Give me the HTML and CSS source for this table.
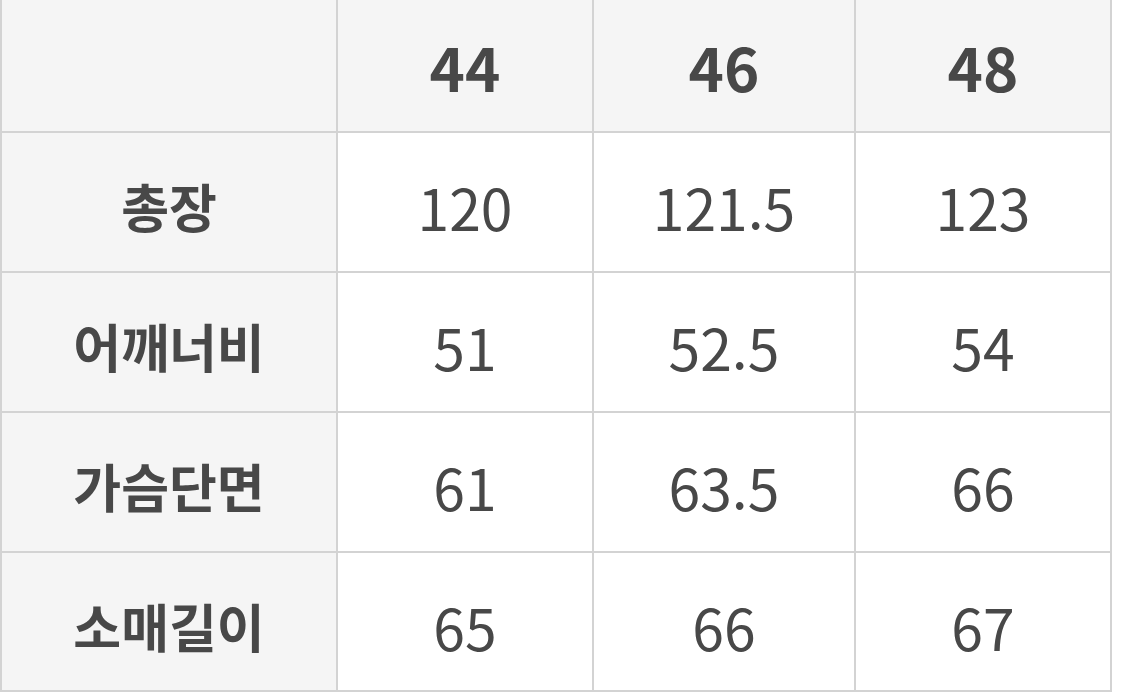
FILE: index.html
```html
<!DOCTYPE html>
<html lang="ko">
<head>
<meta charset="utf-8">
<link rel="stylesheet" href="styles.css">
</head>
<body>
<div class="sheet">
  <div class="cell head"></div>
  <div class="cell head size">44</div>
  <div class="cell head size">46</div>
  <div class="cell head size">48</div>

  <div class="cell head label">총장</div>
  <div class="cell val">120</div>
  <div class="cell val">121.5</div>
  <div class="cell val">123</div>

  <div class="cell head label">어깨너비</div>
  <div class="cell val">51</div>
  <div class="cell val">52.5</div>
  <div class="cell val">54</div>

  <div class="cell head label">가슴단면</div>
  <div class="cell val">61</div>
  <div class="cell val">63.5</div>
  <div class="cell val">66</div>

  <div class="cell head label">소매길이</div>
  <div class="cell val">65</div>
  <div class="cell val">66</div>
  <div class="cell val">67</div>
</div>
</body>
</html>
```

FILE: styles.css
```css
html, body {
  margin: 0;
  padding: 0;
  background: #ffffff;
}

body {
  width: 1125px;
  height: 694px;
  overflow: hidden;
  font-family: "Noto Sans CJK KR", "Noto Sans", sans-serif;
  color: #484848;
}

.sheet {
  display: grid;
  grid-template-columns: 334px 254px 260px 254px;
  grid-template-rows: 131px 138px 138px 138px 137px;
  gap: 2px;
  padding: 0 2px 2px 2px;
  background: #d3d3d3;
  width: max-content;
}

.cell {
  display: flex;
  align-items: center;
  justify-content: center;
  background: #ffffff;
  line-height: 1;
  box-sizing: border-box;
}

.head {
  background: #f5f5f5;
  font-weight: 700;
}

.label {
  font-size: 52px;
  padding-top: 8px;
}

.size {
  font-size: 60px;
  padding-top: 0;
}

.val {
  font-weight: 400;
  font-size: 57px;
  padding-top: 9px;
}
</style>
```
